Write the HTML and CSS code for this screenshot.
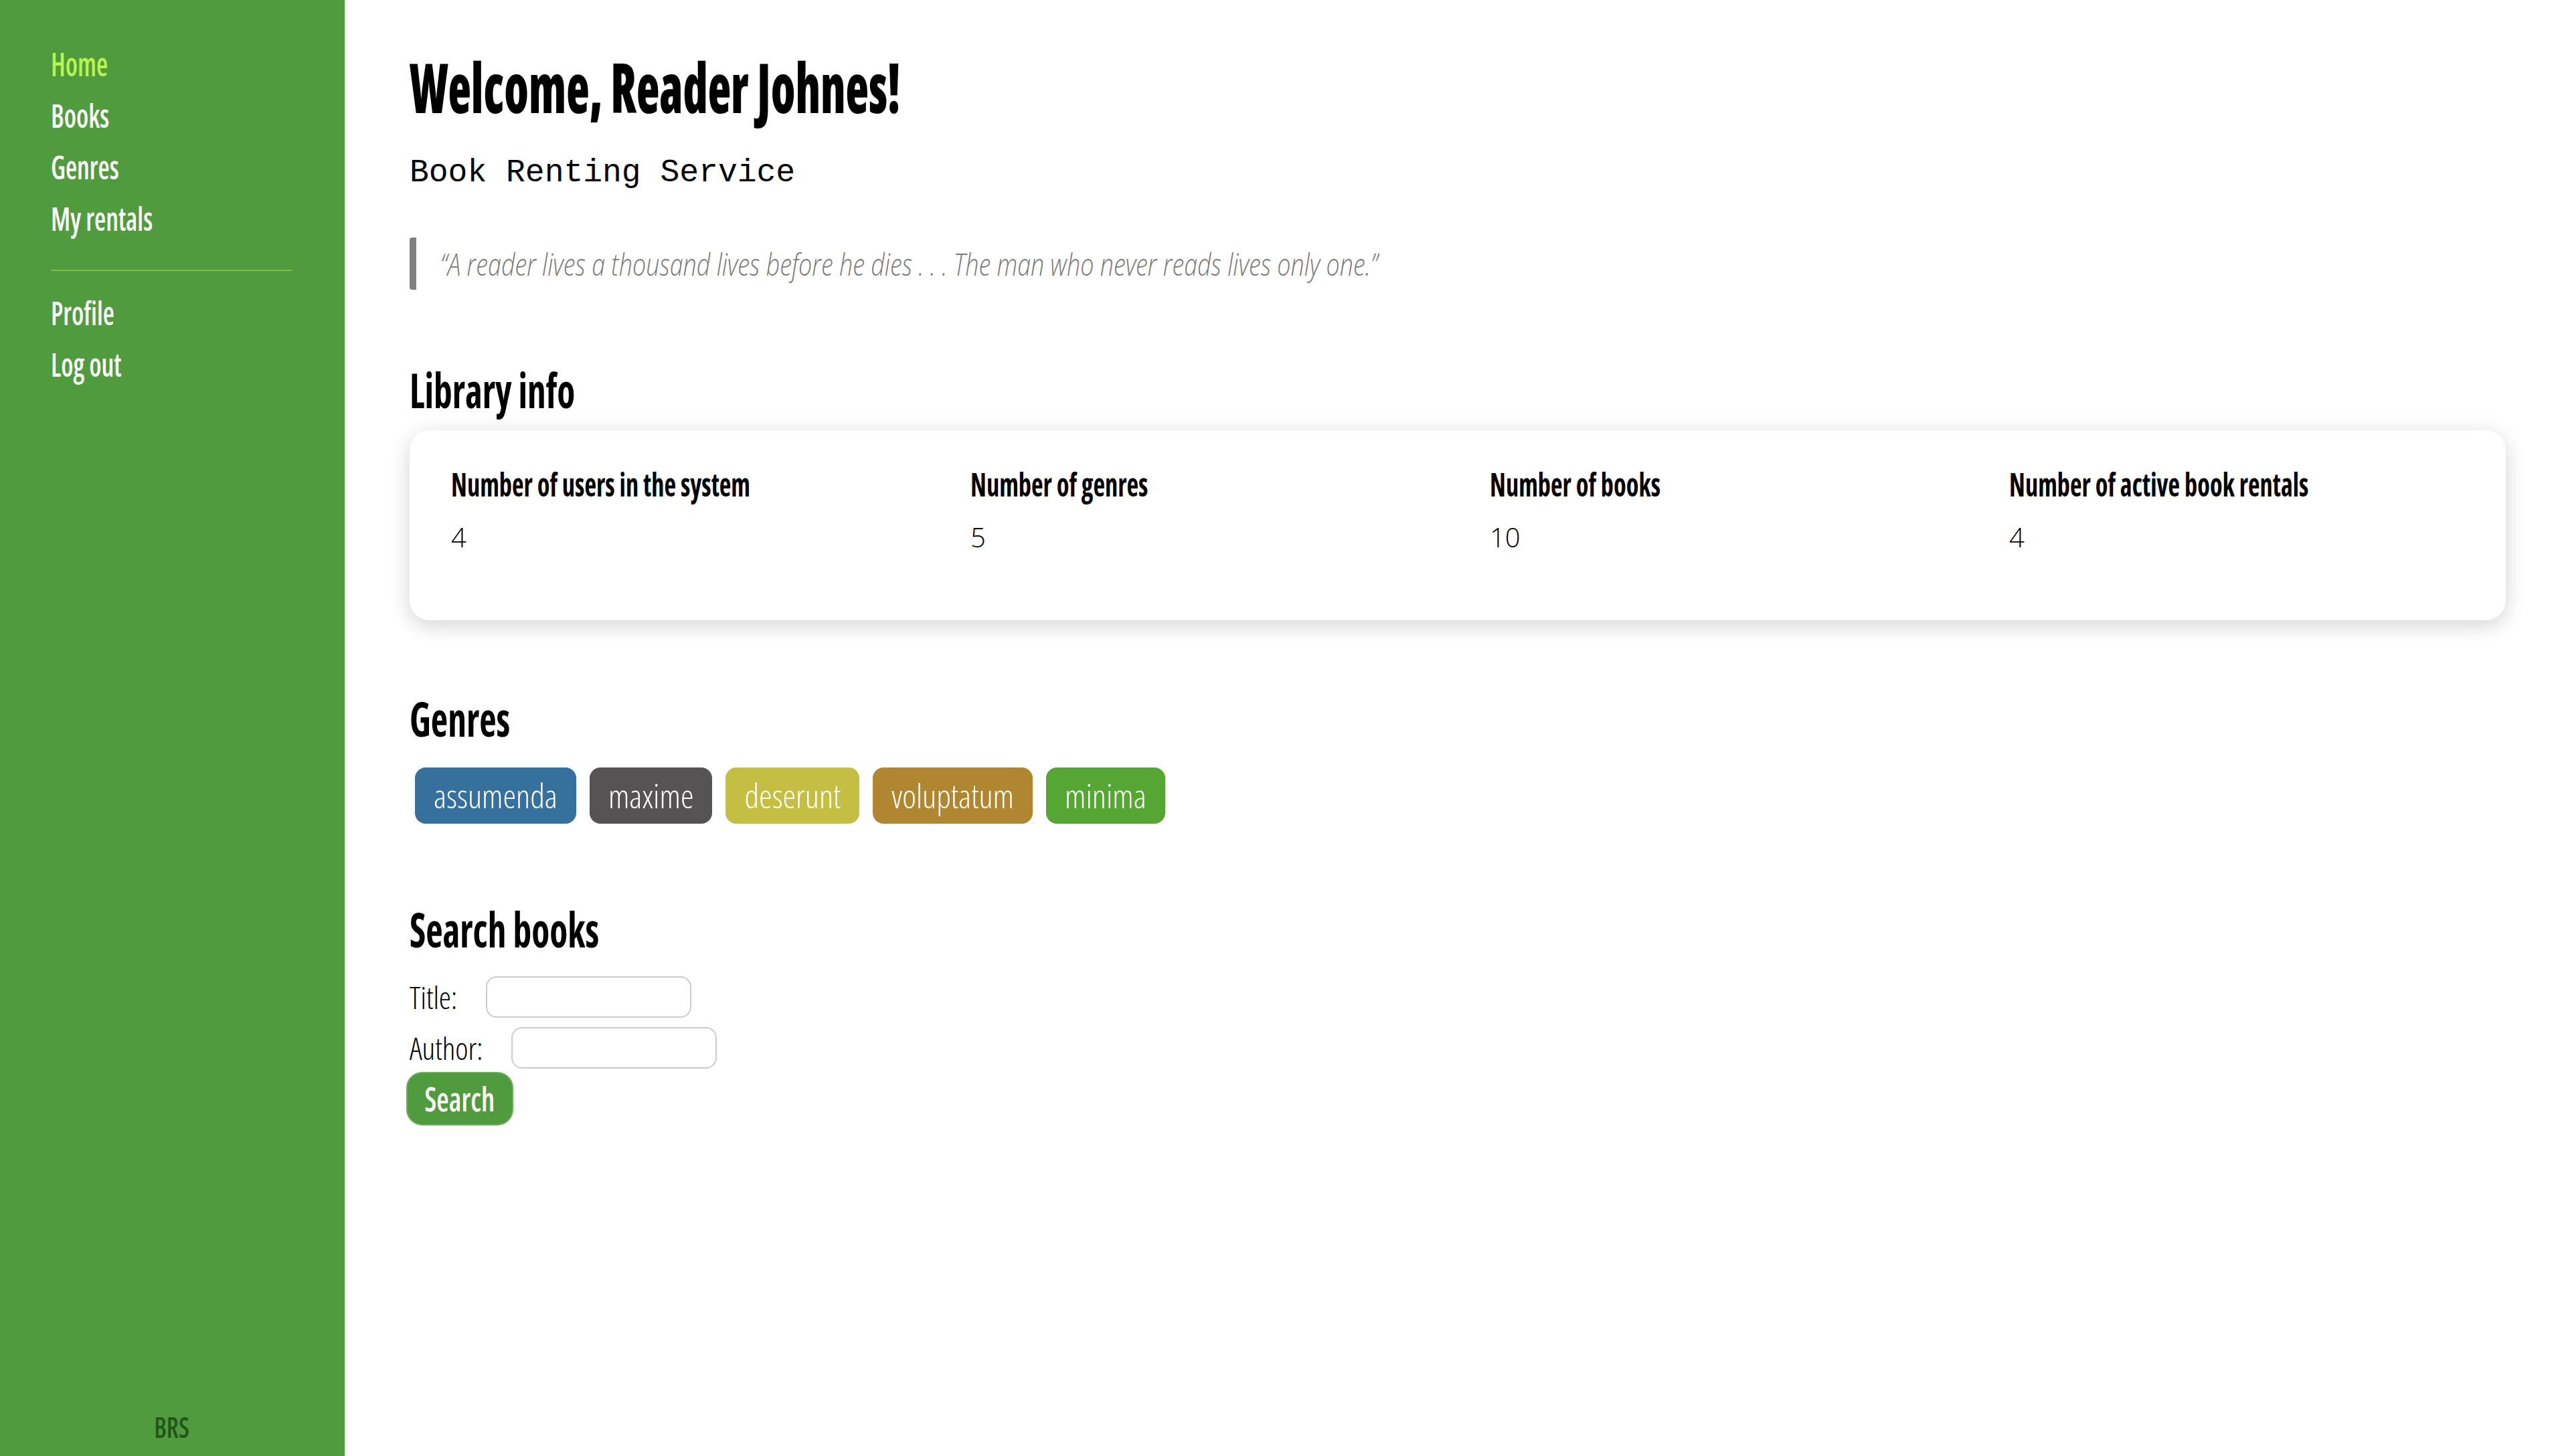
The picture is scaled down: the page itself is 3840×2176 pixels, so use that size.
FILE: index.html
```html
<!DOCTYPE html>
<html lang="en">
<head>
<meta charset="utf-8">
<title>Book Renting Service</title>
<link rel="stylesheet" href="styles.css">
</head>
<body>
<aside class="sidebar">
  <nav class="nav">
    <a class="nav-link active" href="#">Home</a>
    <a class="nav-link" href="#">Books</a>
    <a class="nav-link" href="#">Genres</a>
    <a class="nav-link" href="#">My rentals</a>
    <hr class="nav-sep">
    <a class="nav-link" href="#">Profile</a>
    <a class="nav-link" href="#">Log out</a>
  </nav>
  <div class="brand">BRS</div>
</aside>
<main class="main">
  <h1 class="title">Welcome, Reader Johnes!</h1>
  <p class="subtitle">Book Renting Service</p>
  <blockquote class="quote"><span class="quote-text">“A reader lives a thousand lives before he dies . . . The man who never reads lives only one.”</span></blockquote>

  <h2 class="section-title">Library info</h2>
  <div class="card">
    <div class="stat"><div class="stat-label">Number of users in the system</div><div class="stat-value">4</div></div>
    <div class="stat"><div class="stat-label">Number of genres</div><div class="stat-value">5</div></div>
    <div class="stat"><div class="stat-label">Number of books</div><div class="stat-value">10</div></div>
    <div class="stat"><div class="stat-label">Number of active book rentals</div><div class="stat-value">4</div></div>
  </div>

  <h2 class="section-title genres-title">Genres</h2>
  <div class="tags">
    <span class="tag tag-blue">assumenda</span>
    <span class="tag tag-gray">maxime</span>
    <span class="tag tag-olive">deserunt</span>
    <span class="tag tag-bronze">voluptatum</span>
    <span class="tag tag-green">minima</span>
  </div>

  <h2 class="section-title search-title">Search books</h2>
  <form class="search">
    <div class="field"><label class="field-label">Title:</label><input class="field-input" type="text"></div>
    <div class="field"><label class="field-label">Author:</label><input class="field-input" type="text"></div>
    <button class="btn" type="button"><span class="btn-text">Search</span></button>
  </form>
</main>
</body>
</html>
```

FILE: styles.css
```css
html, body {
  margin: 0;
  padding: 0;
}
body {
  display: flex;
  min-height: 100vh;
  font-family: "Open Sans", "DejaVu Sans Condensed", sans-serif;
  font-stretch: 75%;
  font-size: 40px;
  color: #000;
  background: #fff;
}
.sidebar {
  width: 515px;
  flex: 0 0 515px;
  background: #519b3f;
  display: flex;
  flex-direction: column;
  padding: 57px 78px 0 76px;
  box-sizing: border-box;
}
.nav {
  display: flex;
  flex-direction: column;
}
.nav-link {
  color: #fff;
  text-decoration: none;
  font-size: 48px;
  font-weight: 600;
  line-height: 77px;
  transform: scaleX(0.82);
  transform-origin: left center;
}
.nav-link.active {
  color: #b8f54e;
}
.nav-sep {
  border: 0;
  border-top: 2px solid #7bbd45;
  margin: 38px 0 24px 0;
  width: 100%;
}
.brand {
  margin-top: auto;
  text-align: center;
  color: #23561a;
  font-size: 44px;
  font-weight: 600;
  padding-bottom: 14px;
  transform: scaleX(0.85);
}
.main {
  flex: 1;
  padding: 0 96px 0 97px;
  min-width: 0;
}
.title {
  font-size: 102px;
  font-weight: 800;
  line-height: 1.2;
  margin: 69px 0 0;
  transform: scaleX(0.697);
  transform-origin: left center;
}
.subtitle {
  font-family: "Liberation Mono", "Courier New", monospace;
  font-stretch: normal;
  font-size: 48px;
  line-height: 1.2;
  margin: 39px 0 0;
}
.quote {
  margin: 67px 0 0;
  border-left: 10px solid #808080;
  border-radius: 4px;
  padding-left: 36px;
  color: #7a7a7a;
  font-style: italic;
  font-weight: 300;
  font-size: 46px;
  font-stretch: 100%;
  line-height: 78px;
}
.quote-text {
  display: inline-block;
  white-space: nowrap;
  transform: scaleX(0.78);
  transform-origin: left center;
}
.section-title {
  font-size: 72px;
  font-weight: 700;
  line-height: 1.2;
  margin: 106px 0 0;
  transform: scaleX(0.77);
  transform-origin: left center;
}
.card {
  margin-top: 18px;
  background: #fff;
  border-radius: 30px;
  box-shadow: 0 10px 30px rgba(0, 0, 0, 0.13), 0 0 40px rgba(0, 0, 0, 0.05);
  padding: 52px 66px 100px 62px;
  display: grid;
  grid-template-columns: repeat(4, 1fr);
  column-gap: 100px;
}
.stat-label {
  font-size: 48px;
  font-weight: 700;
  line-height: 1.2;
  transform: scaleX(0.8);
  transform-origin: left center;
  white-space: nowrap;
}
.stat-value {
  margin-top: 26px;
  font-size: 40px;
  font-weight: 300;
  font-stretch: 92%;
  line-height: 1.2;
}
.genres-title {
  margin-top: 103px;
}
.tags {
  margin-top: 31px;
  display: flex;
  gap: 20px;
  padding-left: 8px;
}
.tag {
  color: #fff;
  font-weight: 300;
  font-size: 49.5px;
  font-stretch: 75%;
  line-height: 84px;
  padding: 0 28px;
  border-radius: 16px;
}
.tag-blue { background: #35719c; }
.tag-gray { background: #555354; }
.tag-olive { background: #c4be42; }
.tag-bronze { background: #b08730; }
.tag-green { background: #55a632; }
.search-title {
  margin-top: 114px;
}
.search {
  display: flex;
  flex-direction: column;
  align-items: flex-start;
  margin-top: 20px;
}
.field {
  display: flex;
  align-items: center;
  gap: 43px;
  height: 76px;
}
.field-label {
  font-size: 46px;
  font-weight: 300;
}
.field-input {
  width: 307px;
  height: 62px;
  box-sizing: border-box;
  border: 2px solid #cccccc;
  border-radius: 16px;
  background: #fff;
  font-size: 40px;
}
.btn {
  margin-left: -5px;
  margin-top: -2px;
  width: 160px;
  height: 80px;
  background: #519b3f;
  border: 2px solid #6aae56;
  border-radius: 24px;
  color: #fff;
  font-family: "Open Sans", sans-serif;
  font-stretch: 75%;
  font-size: 50px;
  font-weight: 600;
  padding: 0;
}
.btn-text {
  display: inline-block;
  transform: scaleX(0.85);
}
```
